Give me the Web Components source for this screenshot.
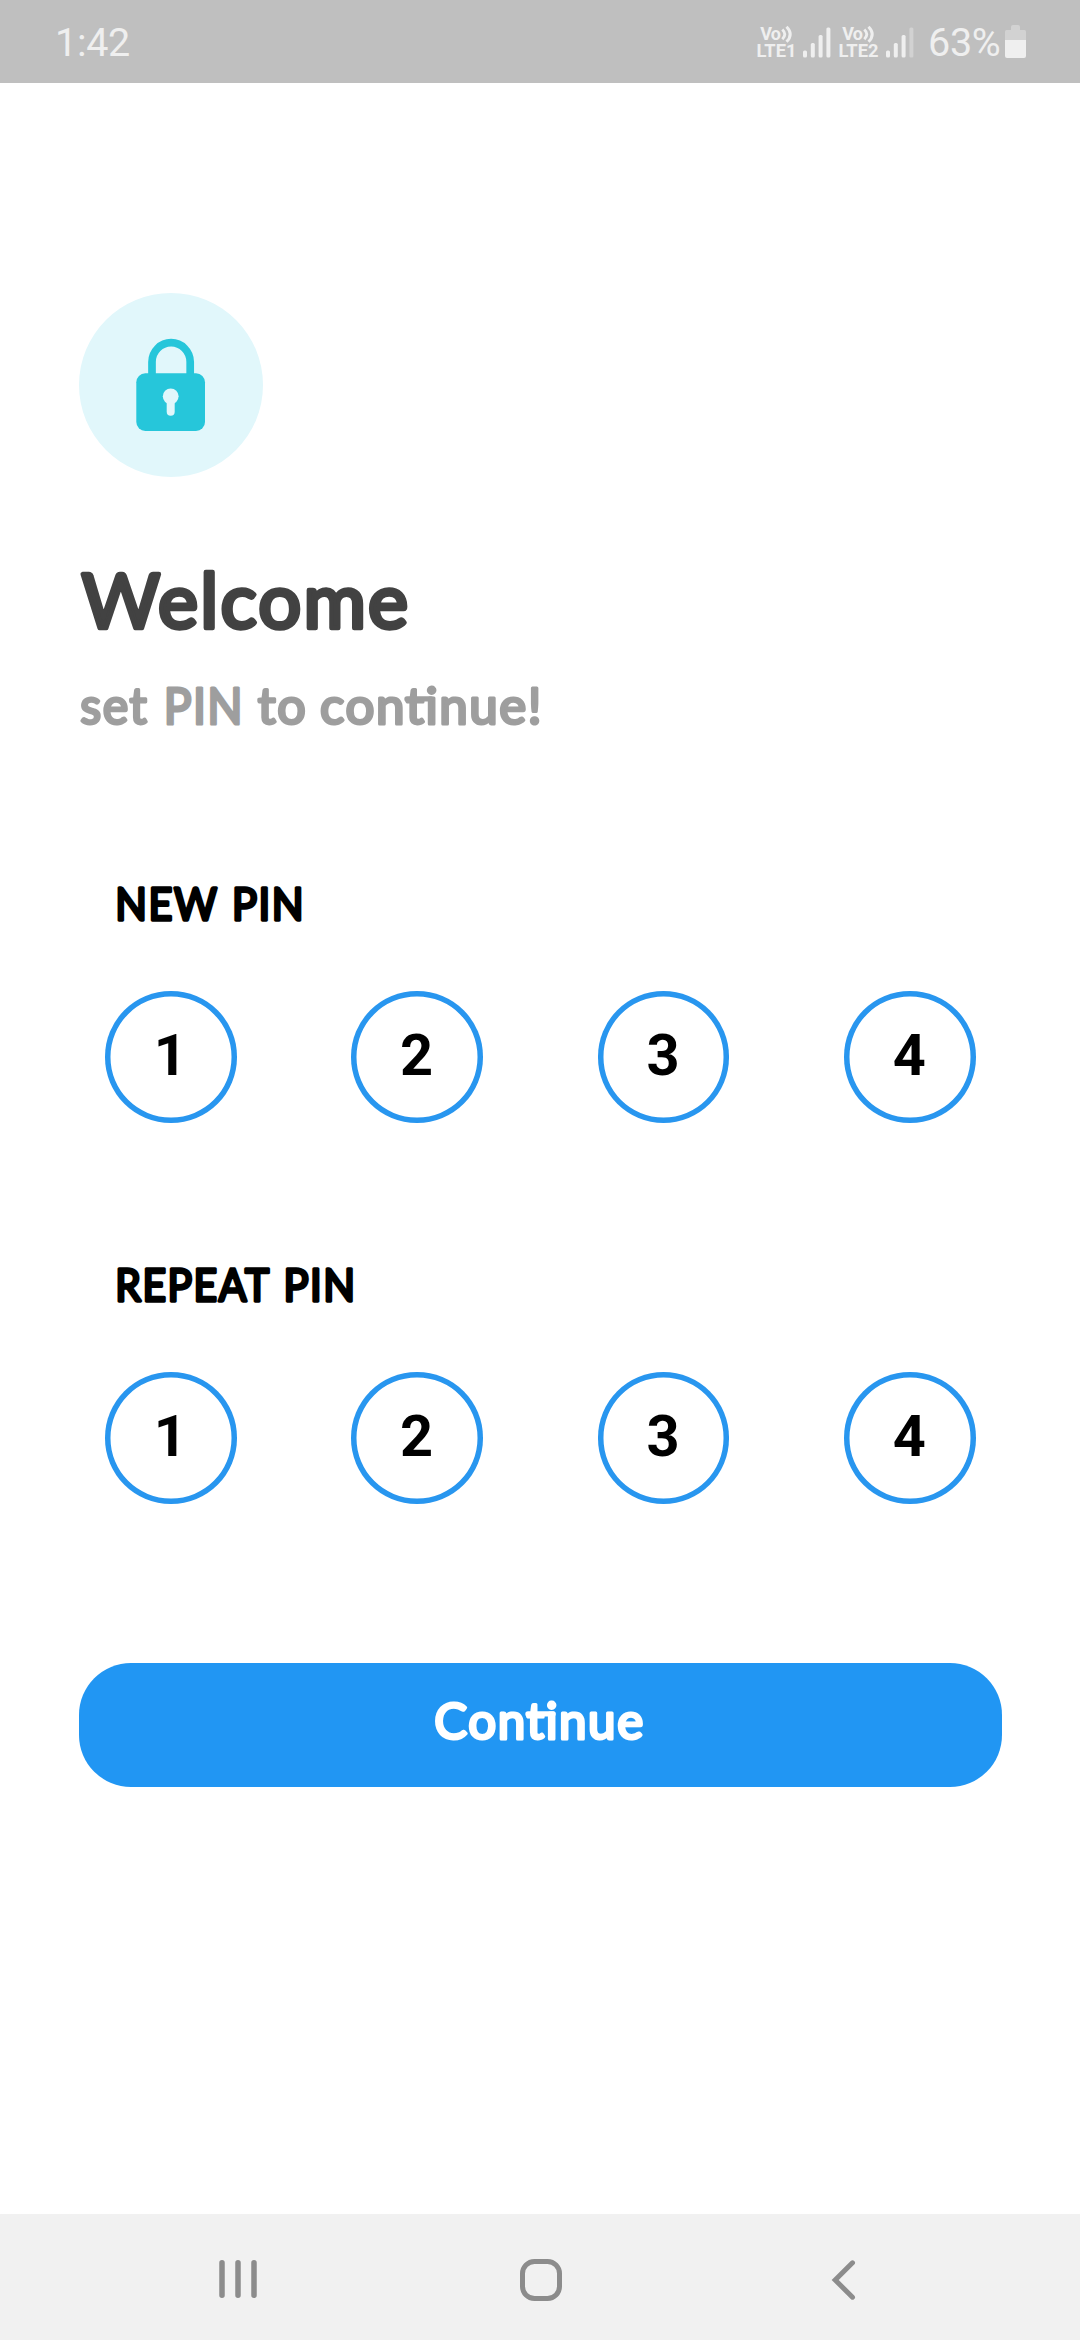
<!DOCTYPE html>
<html lang="en">
<head>
<meta charset="utf-8">
<title>Set PIN</title>
<style>
html,body{margin:0;background:#fff}
body{font-family:Roboto,sans-serif}
</style>
</head>
<body>
<pin-screen></pin-screen>
<script>
const define = (name, html, init) => customElements.define(name, class extends HTMLElement {
  connectedCallback() {
    if (this.shadowRoot) return;
    const t = document.createElement('template');
    t.innerHTML = html;
    this.attachShadow({mode: 'open'}).append(t.content.cloneNode(true));
    if (init) init.call(this, this.shadowRoot);
  }
});

// Rounded humanist lettering. spans = "start,end" extents of each word, in pixels.
define('round-text', `<style>:host{display:block}svg{display:block;overflow:visible}
text{font-family:Lato,"Open Sans",sans-serif;font-kerning:normal;fill:currentColor;stroke:currentColor;stroke-linejoin:round}
path{stroke:currentColor;fill:none;stroke-linecap:round}</style><svg></svg>`, function (root) {
  const ns = 'http://www.w3.org/2000/svg';
  const svg = root.querySelector('svg');
  const cap = +this.getAttribute('cap'), sw = +this.getAttribute('stroke');
  const weight = this.getAttribute('weight') || '400';
  const size = (cap - sw) / 0.7165;
  const gap = sw * 0.5;
  const spans = this.getAttribute('spans').split(' ').map(s => s.split(',').map(Number));
  const ctx = document.createElement('canvas').getContext('2d');
  ctx.font = `${weight} ${size}px Lato`;
  svg.setAttribute('width', spans[spans.length - 1][1]);
  svg.setAttribute('height', cap);
  this.getAttribute('text').split(' ').forEach((word, i) => {
    const m = ctx.measureText(word);
    const [a, b] = spans[i];
    const ink = m.actualBoundingBoxRight + m.actualBoundingBoxLeft + gap * (word.length - 1);
    const sx = (b - a - sw) / ink;
    const t = document.createElementNS(ns, 'text');
    t.textContent = word;
    t.setAttribute('font-size', size);
    t.setAttribute('font-weight', weight);
    t.setAttribute('letter-spacing', gap);
    t.setAttribute('stroke-width', sw);
    t.setAttribute('transform', `translate(${a + sw / 2 + m.actualBoundingBoxLeft * sx} ${cap - sw / 2}) scale(${sx} 1)`);
    svg.append(t);
  });
  const bar = this.getAttribute('bar');
  if (bar) {
    const p = document.createElementNS(ns, 'path');
    p.setAttribute('d', bar);
    p.setAttribute('stroke-width', 5.4);
    svg.append(p);
  }
});

define('volte-label', `<style>:host{display:block;width:40px;height:34px;color:#efefef}svg{display:block;overflow:visible}
text{font-family:Roboto,sans-serif;font-weight:700;fill:#efefef}</style>
<svg width="40" height="34"><text class="v" x="3.300" y="14.500" font-size="18" textLength="20.500">Vo</text>
<path d="M25.300 4.500Q30.300 9.300 25.300 14.200M29.500 1.700Q37 9.300 29.500 16.800" fill="none" stroke="#efefef" stroke-width="2.900"/>
<text class="l" x="-.5" y="32" font-size="18.500" textLength="40" lengthAdjust="spacingAndGlyphs"></text></svg>`, function (root) {
  root.querySelector('.l').textContent = 'LTE' + this.getAttribute('sim');
});

define('signal-bars', `<style>:host{display:block}svg{display:block}</style>
<svg width="28" height="31" fill="#efefef"><rect y="23.500" width="4" height="7" rx="1.500"/><rect x="7.800" y="16" width="4" height="14.500" rx="1.500"/><rect x="15.600" y="8" width="4" height="22.500" rx="1.500"/><rect class="last" x="23.400" y="0.500" width="4" height="30" rx="1.500"/></svg>`, function (root) {
  if (this.hasAttribute('weak')) root.querySelector('.last').setAttribute('fill', '#d2d2d2');
});

define('status-bar', `<style>
:host{display:flex;height:83px;background:#bfbfbf;color:#efefef;font:400 39.5px/46px Roboto,sans-serif;box-sizing:border-box;padding:20px 54px 0 55px}
.time{flex:1;letter-spacing:-.3px}
.right{display:flex;align-items:flex-start}
volte-label{margin-top:5px}
signal-bars{margin-top:7px}
.pct{width:70px;margin-left:14px;letter-spacing:-.3px}
svg{display:block;margin:5px 0 0 7px}
</style>
<span class="time">1:42</span>
<div class="right"><volte-label sim="1"></volte-label><signal-bars style="margin-left:6.500px"></signal-bars>
<volte-label sim="2" style="margin-left:7.500px"></volte-label><signal-bars weak style="margin-left:7.500px"></signal-bars>
<span class="pct">63%</span>
<svg width="21" height="33"><path d="M6 2q0-2 2-2h5q2 0 2 2v3h4.500q1.500 0 1.500 1.500V15H0V6.500Q0 5 1.500 5H6Z" fill="#d2d2d2"/><path d="M0 15H21V31q0 2-2 2H2q-2 0-2-2Z" fill="#efefef"/></svg></div>`);

define('lock-badge', `<style>:host{display:block;width:184px;height:184px}svg{display:block}</style>
<svg width="184" height="184"><circle cx="92" cy="92" r="92" fill="#e1f7fb"/>
<path d="M73 83V69a19.100 19.300 0 0 1 38.200 0V83" fill="none" stroke="#26c6da" stroke-width="7.700"/>
<rect x="57.300" y="80.300" width="68.700" height="57.700" rx="9" fill="#26c6da"/>
<circle cx="91.700" cy="103.300" r="7.900" fill="#e1f7fb"/><path d="M91.700 104V118.700" stroke="#e1f7fb" stroke-width="8" stroke-linecap="round"/></svg>`);

define('pin-digit', `<style>:host{display:flex;width:131.500px;height:131.500px;box-shadow:inset 0 0 0 5.500px #2896ef;border-radius:50%;justify-content:center;color:#000;font:700 57.700px/128px Roboto,sans-serif}
span{display:block;margin-left:-1px}</style><span><slot></slot></span>`);

define('pin-field', `<style>:host{display:block}
.label{padding-left:38px;height:35.500px}
.row{display:flex;justify-content:space-between;margin:69.500px 26px 0 26px}</style>
<div class="label"><slot name="label"></slot></div>
<div class="row"><pin-digit>1</pin-digit><pin-digit>2</pin-digit><pin-digit>3</pin-digit><pin-digit>4</pin-digit></div>`);

define('primary-button', `<style>:host{display:block;height:123.600px;border-radius:52px;background:#2196f3;color:#fff;box-sizing:border-box;padding-top:38.500px}</style><slot></slot>`);

define('nav-bar', `<style>:host{display:flex;height:126px;background:#f1f1f1;box-sizing:border-box;padding:44px 224px 0 217px;justify-content:space-between}svg{display:block}</style>
<svg width="42" height="44" stroke="#8c8c8c" stroke-width="5.500" stroke-linecap="round"><path d="M5 4.700V37.300M21 4.700V37.300M37 4.700V37.300"/></svg>
<svg width="52" height="44" fill="none" stroke="#8c8c8c" stroke-width="5"><rect x="4.500" y="3.500" width="37" height="37" rx="12"/></svg>
<svg width="28" height="44" fill="none" stroke="#8c8c8c" stroke-width="5" stroke-linecap="round"><path d="M24.500 4.800L7.200 22L24.500 39.200"/></svg>`);

define('pin-screen', `<style>
:host{display:flex;flex-direction:column;width:1080px;height:2340px;background:#fff}
main{flex:1;padding:210px 78.300px 0 79px}
.title{color:#424242;margin-top:95px}
.sub{color:#9e9e9e;margin-top:56px}
.first{margin-top:161px}.second{margin-top:144.800px}
primary-button{margin-top:159.700px}
</style>
<status-bar></status-bar>
<main>
<lock-badge></lock-badge>
<round-text class="title" text="Welcome" cap="58.500" stroke="4.400" weight="400" spans="1.300,328.500"></round-text>
<round-text class="sub" text="set PIN to continue!" cap="38.500" stroke="3" weight="400" spans="0.800,69.500 87,161.500 178.300,226 241.600,461.500" bar="M328 11.900H352"></round-text>
<pin-field class="first"><round-text slot="label" text="NEW PIN" cap="35.700" stroke="3.300" weight="400" spans="0.300,101.700 117,185"></round-text></pin-field>
<pin-field class="second"><round-text slot="label" text="REPEAT PIN" cap="35.700" stroke="3.300" weight="400" spans="0.300,154 168.500,236.500"></round-text></pin-field>
<primary-button><round-text text="Continue" cap="38.500" stroke="3.100" weight="400" spans="355.800,565.500" bar="M449 11.900H474"></round-text></primary-button>
</main>
<nav-bar></nav-bar>`);
</script>
</body>
</html>
